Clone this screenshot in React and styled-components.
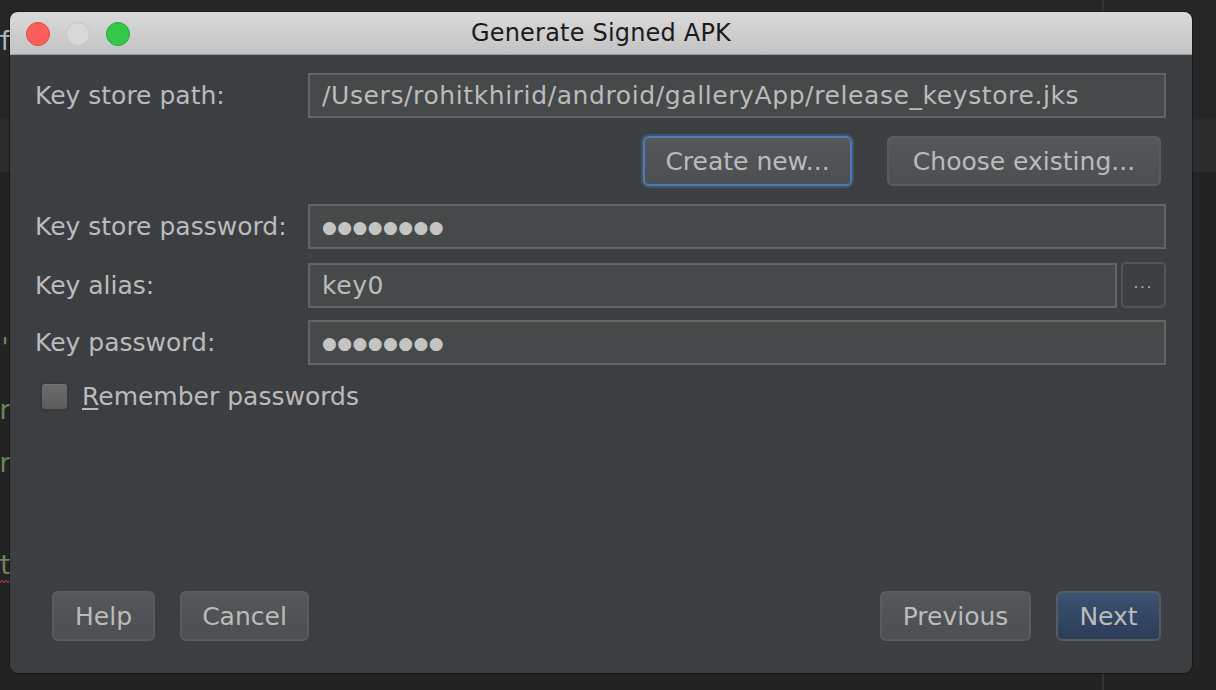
import React from 'react';
import styled, { createGlobalStyle } from 'styled-components';

const GlobalStyle = createGlobalStyle`
  html, body {
    margin: 0;
    padding: 0;
    background: #232323;
  }
  * {
    box-sizing: border-box;
  }
`;

const Editor = styled.div`
  position: relative;
  width: 1216px;
  height: 690px;
  overflow: hidden;
  background: linear-gradient(
    to bottom,
    #262626 0,
    #262626 119px,
    #2b2b2b 119px,
    #2b2b2b 172px,
    #232323 172px
  );
  font-family: 'DejaVu Sans', 'Liberation Sans', sans-serif;
`;

const Divider = styled.div`
  position: absolute;
  left: 1102px;
  top: 0;
  bottom: 0;
  width: 2px;
  background: #343434;
`;

// code peeking out from behind the dialog on the left edge
const CodeGutter = styled.div`
  position: absolute;
  left: 0;
  top: 0;
  width: 10px;
  height: 100%;
  overflow: hidden;
`;

const CodeGlyph = styled.span`
  position: absolute;
  right: -3px;
  top: ${(p) => p.$top}px;
  font-family: 'DejaVu Sans Mono', monospace;
  font-size: 26px;
  line-height: 30px;
  color: ${(p) => p.$color};
`;

const Squiggle = styled.svg`
  position: absolute;
  left: 0;
  top: 578px;
`;

const Dialog = styled.div`
  position: absolute;
  left: 10px;
  top: 12px;
  width: 1182px;
  height: 661px;
  display: flex;
  flex-direction: column;
  background: #3c3f41;
  border-radius: 8px;
  overflow: hidden;
  box-shadow: 0 0 0 1px rgba(0, 0, 0, 0.35);
`;

const TitleBar = styled.div`
  position: relative;
  height: 43px;
  flex: none;
  display: flex;
  align-items: center;
  justify-content: center;
  background: linear-gradient(to bottom, #dadada, #c3c3c3);
  border-bottom: 1px solid #9c9c9c;
`;

const Lights = styled.div`
  position: absolute;
  left: 16px;
  top: 10px;
  display: flex;
  gap: 16px;
`;

const Light = styled.span`
  width: 24px;
  height: 24px;
  border-radius: 50%;
  background: ${(p) => p.$color};
  border: 1px solid ${(p) => p.$edge};
`;

const Title = styled.div`
  font-size: 24px;
  color: #1b1b1b;
  letter-spacing: 0.2px;
`;

const Body = styled.div`
  flex: 1;
  display: flex;
  flex-direction: column;
  padding: 18px 26px 32px 25px;
`;

const Row = styled.div`
  display: flex;
  align-items: center;
  margin-top: ${(p) => p.$gap || 0}px;
`;

const Label = styled.div`
  width: 273px;
  flex: none;
  font-size: 25px;
  color: #bbbbbb;
`;

const Field = styled.div`
  flex: 1;
  height: 45px;
  display: flex;
  align-items: center;
  padding-left: 12px;
  background: #45494a;
  border: 2px solid #646464;
  font-size: 25px;
  letter-spacing: 0.6px;
  color: #bbbbbb;
  white-space: nowrap;
`;

const Dots = styled.span`
  font-size: 17px;
  letter-spacing: 0.4px;
  color: #c4c4c4;
`;

const Browse = styled.div`
  width: 45px;
  height: 46px;
  margin-left: 4px;
  flex: none;
  display: flex;
  align-items: center;
  justify-content: center;
  border: 2px solid #525557;
  border-radius: 5px;
  background: #3d4042;
  color: #c0c0c0;
  font-size: 14px;
  letter-spacing: 2px;
  padding-bottom: 4px;
`;

const ActionRow = styled.div`
  display: flex;
  justify-content: flex-end;
  align-items: center;
  gap: 35px;
  margin-top: 18px;
  padding-right: 5px;
`;

const Button = styled.div`
  height: 50px;
  width: ${(p) => p.$w}px;
  display: flex;
  align-items: center;
  justify-content: center;
  border-radius: 6px;
  font-size: 25px;
  color: #bbbbbb;
  border: 2px solid ${(p) => (p.$focused ? '#4a7db5' : '#595c5e')};
  background: ${(p) =>
    p.$primary
      ? 'linear-gradient(to bottom, #3a5273, #2b3d57)'
      : 'linear-gradient(to bottom, #54585a, #4b4f51)'};
  box-shadow: ${(p) =>
    p.$focused ? '0 0 0 2px rgba(74, 125, 181, 0.35)' : 'none'};
`;

const CheckRow = styled.div`
  display: flex;
  align-items: center;
  margin-top: 17px;
  padding-left: 5px;
  gap: 13px;
`;

const CheckBox = styled.span`
  width: 29px;
  height: 29px;
  border-radius: 5px;
  background: linear-gradient(to bottom, #6c6c6c, #5c5c5c);
  border: 2px solid #3a3a3a;
  box-shadow: inset 0 1px 0 rgba(255, 255, 255, 0.08);
`;

const CheckLabel = styled.span`
  font-size: 25px;
  color: #bbbbbb;
`;

const Mnemonic = styled.span`
  text-decoration: underline;
  text-underline-offset: 3px;
`;

const Footer = styled.div`
  margin-top: auto;
  display: flex;
  align-items: center;
  justify-content: space-between;
  padding: 0 5px 0 17px;
`;

const ButtonGroup = styled.div`
  display: flex;
  gap: 25px;
`;

const dots = '\u25CF'.repeat(8);

export default function App() {
  return (
    <>
      <GlobalStyle />
      <Editor>
        <Divider />
        <CodeGutter>
          <CodeGlyph $top={26} $color="#a9b7c6">f</CodeGlyph>
          <CodeGlyph $top={333} $color="#6a8759">'</CodeGlyph>
          <CodeGlyph $top={395} $color="#6a8759">r</CodeGlyph>
          <CodeGlyph $top={448} $color="#6a8759">r</CodeGlyph>
          <CodeGlyph $top={550} $color="#6a8759">t</CodeGlyph>
          <Squiggle width="12" height="6" viewBox="0 0 12 6">
            <path d="M0 5 L2 2 L4 5 L6 2 L8 5 L10 2 L12 5" fill="none" stroke="#bc3f3c" strokeWidth="1" />
          </Squiggle>
        </CodeGutter>

        <Dialog>
          <TitleBar>
            <Lights>
              <Light $color="#fc605c" $edge="#de4a46" />
              <Light $color="#d8d8d8" $edge="#c4c4c4" />
              <Light $color="#34c84a" $edge="#27a83a" />
            </Lights>
            <Title>Generate Signed APK</Title>
          </TitleBar>

          <Body>
            <Row>
              <Label>Key store path:</Label>
              <Field>/Users/rohitkhirid/android/galleryApp/release_keystore.jks</Field>
            </Row>

            <ActionRow>
              <Button $w={209} $focused>Create new...</Button>
              <Button $w={274}>Choose existing...</Button>
            </ActionRow>

            <Row $gap={18}>
              <Label>Key store password:</Label>
              <Field><Dots>{dots}</Dots></Field>
            </Row>

            <Row $gap={13}>
              <Label>Key alias:</Label>
              <Field>key0</Field>
              <Browse>...</Browse>
            </Row>

            <Row $gap={12}>
              <Label>Key password:</Label>
              <Field><Dots>{dots}</Dots></Field>
            </Row>

            <CheckRow>
              <CheckBox />
              <CheckLabel><Mnemonic>R</Mnemonic>emember passwords</CheckLabel>
            </CheckRow>

            <Footer>
              <ButtonGroup>
                <Button $w={103}>Help</Button>
                <Button $w={129}>Cancel</Button>
              </ButtonGroup>
              <ButtonGroup>
                <Button $w={151}>Previous</Button>
                <Button $w={105} $primary>Next</Button>
              </ButtonGroup>
            </Footer>
          </Body>
        </Dialog>
      </Editor>
    </>
  );
}
